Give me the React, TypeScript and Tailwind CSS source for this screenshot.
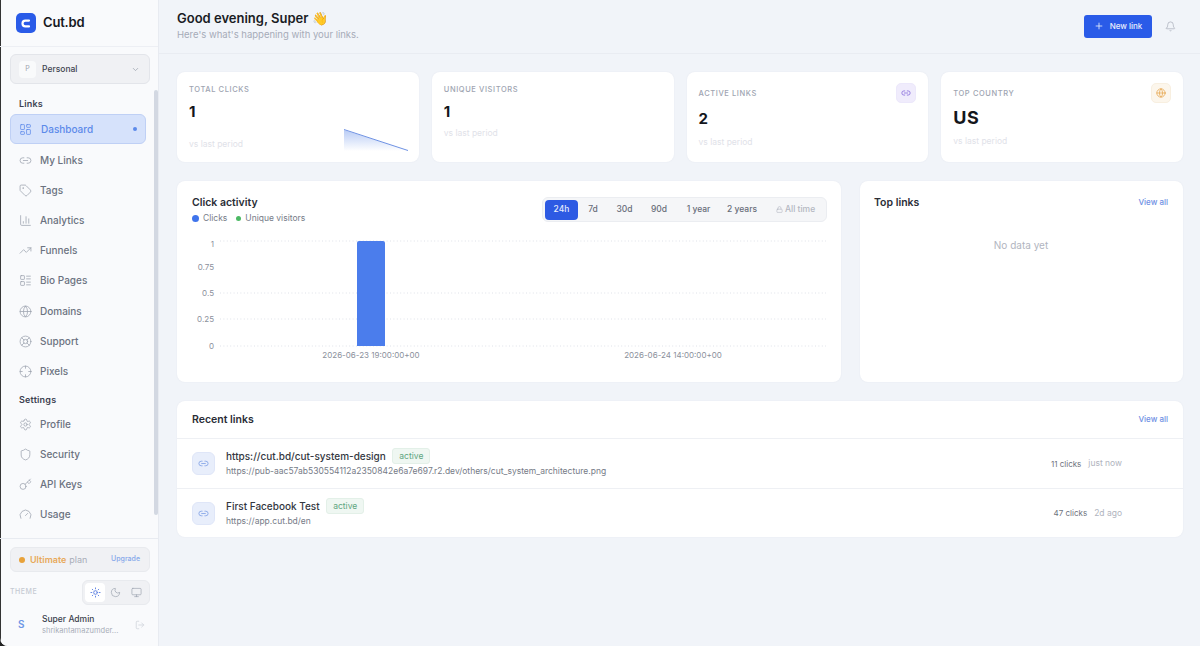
import {
  Bell,
  ChartColumn,
  ChevronDown,
  Crosshair,
  Gauge,
  Globe,
  Key,
  LayoutDashboard,
  LayoutList,
  LifeBuoy,
  Link2,
  Lock,
  LogOut,
  Monitor,
  Moon,
  Plus,
  Settings,
  Shield,
  Sun,
  Tag,
  TrendingUp,
} from "lucide-react";

const linkItems = [
  { label: "My Links", icon: Link2 },
  { label: "Tags", icon: Tag },
  { label: "Analytics", icon: ChartColumn },
  { label: "Funnels", icon: TrendingUp },
  { label: "Bio Pages", icon: LayoutList },
  { label: "Domains", icon: Globe },
  { label: "Support", icon: LifeBuoy },
  { label: "Pixels", icon: Crosshair },
];

const settingItems = [
  { label: "Profile", icon: Settings },
  { label: "Security", icon: Shield },
  { label: "API Keys", icon: Key },
  { label: "Usage", icon: Gauge },
];

function NavItem({ label, icon: Icon }: { label: string; icon: typeof Link2 }) {
  return (
    <div className="flex h-[30.2px] items-center gap-[8px] pl-[19px] text-[10px] font-medium text-[#6b7280]">
      <Icon size={13} strokeWidth={1.4} className="shrink-0 text-[#9ca3af]" />
      {label}
    </div>
  );
}

function Sidebar() {
  return (
    <aside className="flex h-[646px] w-[159px] shrink-0 flex-col border-r border-[#e8ebf1] bg-[#f9fafc] shadow-[inset_1px_0_0_#333]">
      <div className="flex h-[47px] shrink-0 items-center gap-[7px] border-b border-[#edeff4] pl-[16px]">
        <div className="flex h-[20px] w-[20px] items-center justify-center rounded-[5px] bg-[#2a5be8]">
          <svg width="10" height="9" viewBox="0 0 10 9" fill="none">
            <path d="M8 1.6H4.4a2.9 2.9 0 0 0 0 5.8H8" stroke="#fff" strokeWidth="2.2" strokeLinecap="round" />
          </svg>
        </div>
        <span className="text-[13px] font-semibold tracking-[-0.2px] text-[#17191f]">Cut.bd</span>
      </div>

      <div className="ml-[10px] mr-[8px] mt-[7px] flex h-[30px] shrink-0 items-center rounded-[6px] border border-[#e3e5ea] bg-[#f0f1f4] pl-[8px] pr-[9px]">
        <div className="flex h-[17px] w-[17px] items-center justify-center rounded-[4px] bg-[#f9fafb] text-[7px] text-[#9ca3af]">P</div>
        <span className="ml-[6px] flex-1 text-[8.5px] font-medium text-[#3f4451]">Personal</span>
        <ChevronDown size={9} className="text-[#9ca3af]" />
      </div>

      <div className="relative min-h-0 flex-1 overflow-hidden">
        <div className="absolute right-0 top-[6px] h-[425px] w-[4px] rounded-full bg-[#d3d8e2]" />
        <div className="pl-[19px] pt-[14px] text-[9px] font-semibold leading-[12px] tracking-[0.2px] text-[#3c4150]">Links</div>
        <div className="ml-[10px] mr-[12px] mt-[4px] flex h-[30px] items-center gap-[9px] rounded-[6px] border border-[#bfd0f5] bg-[#d6e2fb] pl-[8px] pr-[8px] text-[10px] font-medium text-[#5c8aea]">
          <LayoutDashboard size={13} strokeWidth={1.4} className="shrink-0" />
          <span className="flex-1">Dashboard</span>
          <span className="h-[4px] w-[4px] rounded-full bg-[#5c8aea]" />
        </div>
        <div className="mt-[1px]">
          {linkItems.map((item) => (
            <NavItem key={item.label} {...item} />
          ))}
        </div>
        <div className="pl-[19px] pt-[7px] text-[9px] font-semibold leading-[12px] tracking-[0.2px] text-[#3c4150]">Settings</div>
        <div className="mt-[3.6px]">
          {settingItems.map((item) => (
            <NavItem key={item.label} {...item} />
          ))}
        </div>
      </div>

      <div className="h-[108px] shrink-0 border-t border-[#e8ebf1] pl-[10px] pr-[8px] pt-[8px]">
        <div className="flex h-[25px] items-center rounded-[6px] border border-[#e8eaee] bg-[#f0f1f4] pl-[8px] pr-[9px] text-[9px]">
          <span className="h-[6px] w-[6px] rounded-full bg-[#e8a23a]" />
          <span className="ml-[5px] font-semibold text-[#e8a95a]">Ultimate</span>
          <span className="ml-[3px] flex-1 text-[#a8adb8]">plan</span>
          <span className="text-[7px] font-medium text-[#85a8ea]">Upgrade</span>
        </div>
        <div className="mt-[8px] flex items-center justify-between">
          <span className="text-[7px] font-medium tracking-[0.5px] text-[#c6cad3]">THEME</span>
          <div className="flex h-[25px] w-[68px] items-center rounded-[6px] border border-[#e8eaee] bg-[#f0f1f4] p-[2px]">
            <div className="flex h-[19px] w-[20px] items-center justify-center rounded-[4px] bg-white">
              <Sun size={11} className="text-[#5c7fe0]" />
            </div>
            <div className="flex flex-1 items-center justify-center">
              <Moon size={11} strokeWidth={1.5} className="text-[#9ca3af]" />
            </div>
            <div className="flex flex-1 items-center justify-center">
              <Monitor size={11} strokeWidth={1.5} className="text-[#9ca3af]" />
            </div>
          </div>
        </div>
        <div className="mt-[8px] flex items-center">
          <span className="w-[32px] pl-[8px] text-[10px] font-semibold text-[#6d96e6]">S</span>
          <div className="min-w-0 flex-1">
            <div className="text-[8.5px] font-medium leading-[12px] text-[#3a3f4c]">Super Admin</div>
            <div className="text-[7.5px] leading-[11px] text-[#a9aeb9]">shrikantamazumder...</div>
          </div>
          <LogOut size={10} className="mr-[5px] text-[#d3d6dd]" />
        </div>
      </div>
    </aside>
  );
}

function StatCard({
  label,
  value,
  icon,
  className = "",
  valueClass = "mt-[9px] text-[15px]",
  children,
}: {
  label: string;
  value: string;
  icon?: React.ReactNode;
  className?: string;
  valueClass?: string;
  children?: React.ReactNode;
}) {
  return (
    <div className={`relative h-[90px] rounded-[8px] bg-white px-[12px] shadow-[0_0_2px_rgba(30,40,80,0.06)] ${className}`}>
      <div className="flex items-center justify-between">
        <div className={`text-[7.5px] font-medium tracking-[0.6px] text-[#9ea4b1] ${icon ? "pt-[2px]" : ""}`}>{label}</div>
        {icon}
      </div>
      <div className={`font-bold leading-[16px] text-[#14161c] ${valueClass}`}>{value}</div>
      {children}
    </div>
  );
}

function Chart() {
  const grid = [
    { y: 241, label: "1", dy: 6, line: true },
    { y: 267, label: "0.75", dy: 3, line: false },
    { y: 293, label: "0.5", dy: 3, line: true },
    { y: 319, label: "0.25", dy: 3, line: true },
    { y: 346, label: "0", dy: 3, line: true },
  ];
  return (
    <svg width="664" height="140" viewBox="177 235 664 140" className="block">
      {grid.map((g) => (
        <g key={g.y}>
          {g.line && <line x1="220" x2="826" y1={g.y} y2={g.y} stroke="#dfe2e9" strokeWidth="1" strokeDasharray="1 2.4" />}
          <text x="214" y={g.y + g.dy} textAnchor="end" fontSize="8" fill="#8b909c">{g.label}</text>
        </g>
      ))}
      <path d="M357 346V243a2 2 0 0 1 2-2h24a2 2 0 0 1 2 2v103z" fill="#4b7dec" />
      <text x="371" y="358" textAnchor="middle" fontSize="8" fill="#8b909c">2026-06-23 19:00:00+00</text>
      <text x="673" y="358" textAnchor="middle" fontSize="8" fill="#8b909c">2026-06-24 14:00:00+00</text>
    </svg>
  );
}

function LinkRow({ title, url, clicks, time, border }: { title: string; url: string; clicks: string; time: string; border?: boolean }) {
  return (
    <div className={`flex h-[49px] items-center pl-[15px] pr-[61px] ${border ? "border-t border-[#eef0f4]" : ""}`}>
      <div className="flex h-[23px] w-[23px] shrink-0 items-center justify-center rounded-[6px] border border-[#dfe6f8] bg-[#e8eefb]">
        <Link2 size={11} className="text-[#8aa8e8]" />
      </div>
      <div className="ml-[11px] min-w-0 flex-1 pb-[2px]">
        <div className="flex items-center gap-[6.5px]">
          <span className="text-[10px] font-medium leading-[16px] text-[#33373f]">{title}</span>
          <span className="rounded-[3px] border border-[#e3f0e8] bg-[#eff7f2] px-[6px] text-[8.5px] leading-[14px] text-[#5ea681]">active</span>
        </div>
        <div className="mt-[1px] text-[8.5px] leading-[12px] text-[#767b87]">{url}</div>
      </div>
      <span className="text-[8px] text-[#6e727d]">{clicks}</span>
      <span className="ml-[7px] text-[8.5px] text-[#b0b4be]">{time}</span>
    </div>
  );
}

export default function App() {
  return (
    <div className="flex h-[646px] w-[1200px] overflow-hidden bg-[#222] font-['Inter',sans-serif]">
      <div className="flex w-full overflow-hidden rounded-bl-[8px] bg-[#f1f4f9]">
        <Sidebar />
        <main className="min-w-0 flex-1">
          <header className="flex h-[54px] items-center justify-between border-b border-[#e9ecf2] pl-[18px] pr-[24px]">
            <div className="-mt-[3px]">
              <div className="text-[13px] font-semibold leading-[18px] text-[#1a1c24]">Good evening, Super 👋</div>
              <div className="text-[9.5px] leading-[15px] text-[#a6abb8]">Here's what's happening with your links.</div>
            </div>
            <div className="flex items-center gap-[13px]">
              <button className="flex h-[23px] w-[68px] items-center justify-center gap-[6px] rounded-[3px] bg-[#2a5be8] pb-[1px] text-[8px] font-medium text-[#e8eefc]">
                <Plus size={10} />
                New link
              </button>
              <Bell size={11} strokeWidth={1.4} className="text-[#a0a5b1]" />
            </div>
          </header>

          <div className="flex flex-col gap-[19px] pl-[18px] pr-[17px] pt-[18px]">
            <div className="grid grid-cols-4 gap-[13px]">
              <StatCard label="TOTAL CLICKS" value="1" className="pt-[12px]">
                <div className="mt-[18px] text-[8.5px] text-[#dfe2e9]">vs last period</div>
                <svg width="64" height="24" viewBox="0 0 64 24" className="absolute bottom-[11px] right-[11px]">
                  <defs>
                    <linearGradient id="spark" x1="0" y1="0" x2="0" y2="1">
                      <stop offset="0" stopColor="#b9ccf5" />
                      <stop offset="1" stopColor="#ffffff" />
                    </linearGradient>
                  </defs>
                  <path d="M0 3L64 23.5V24H0z" fill="url(#spark)" />
                  <path d="M0 2.5L64 23.5" stroke="#5f86e0" strokeWidth="0.9" fill="none" />
                </svg>
              </StatCard>
              <StatCard label="UNIQUE VISITORS" value="1" className="pt-[12px]">
                <div className="mt-[7px] text-[8.5px] text-[#dfe2e9]">vs last period</div>
              </StatCard>
              <StatCard
                label="ACTIVE LINKS"
                value="2"
                className="pt-[11px]"
                valueClass="mt-[8px] text-[15px]"
                icon={
                  <div className="flex h-[20px] w-[20px] items-center justify-center rounded-[5px] border border-[#ece8fb] bg-[#f0ecfc]">
                    <Link2 size={10} className="text-[#8a6fdc]" />
                  </div>
                }
              >
                <div className="mt-[9px] text-[8.5px] text-[#dfe2e9]">vs last period</div>
              </StatCard>
              <StatCard
                label="TOP COUNTRY"
                value="US"
                className="pt-[11px]"
                valueClass="mt-[7px] text-[18px] tracking-[0.5px]"
                icon={
                  <div className="flex h-[20px] w-[20px] items-center justify-center rounded-[5px] border border-[#f8efe0] bg-[#fcf6ec]">
                    <Globe size={10} className="text-[#e8ac5a]" />
                  </div>
                }
              >
                <div className="mt-[9px] text-[8.5px] text-[#dfe2e9]">vs last period</div>
              </StatCard>
            </div>

            <div className="flex gap-[19px]">
              <section className="h-[201px] w-[664px] shrink-0 rounded-[8px] bg-white shadow-[0_0_2px_rgba(30,40,80,0.06)]">
                <div className="flex items-start justify-between pl-[15px] pr-[14px] pt-[15px]">
                  <div>
                    <div className="text-[10.5px] font-semibold leading-[13px] text-[#2a2d36]">Click activity</div>
                    <div className="mt-[3px] flex items-center text-[8.5px] leading-[12px] text-[#777c88]">
                      <span className="h-[7px] w-[7px] rounded-full bg-[#3f74ec]" />
                      <span className="ml-[4px]">Clicks</span>
                      <span className="ml-[9px] h-[5px] w-[5px] rounded-full bg-[#4cb964]" />
                      <span className="ml-[4px]">Unique visitors</span>
                    </div>
                  </div>
                  <div className="mt-[1px] flex h-[25px] items-center rounded-[6px] border border-[#ebedf1] bg-[#f5f6f8] pl-[2px] text-[8.5px] font-medium text-[#686d78]">
                    <span className="flex h-[20px] w-[33px] items-center justify-center rounded-[4px] bg-[#2d5ae3] text-[#e5ecfc]">24h</span>
                    <span className="w-[30px] text-center">7d</span>
                    <span className="w-[33px] text-center">30d</span>
                    <span className="w-[36px] text-center">90d</span>
                    <span className="w-[43px] text-center">1 year</span>
                    <span className="w-[44px] text-center">2 years</span>
                    <span className="flex w-[62px] items-center gap-[2px] pl-[12px] text-[#b3b7c1]">
                      <Lock size={7} />
                      All time
                    </span>
                  </div>
                </div>
                <div className="mt-[11px]">
                  <Chart />
                </div>
              </section>
              <section className="flex h-[201px] flex-1 flex-col rounded-[8px] bg-white pl-[14px] pr-[15px] pt-[15px] shadow-[0_0_2px_rgba(30,40,80,0.06)]">
                <div className="flex h-[13px] items-center justify-between">
                  <span className="text-[10.5px] font-semibold leading-[13px] text-[#2a2d36]">Top links</span>
                  <span className="text-[8px] font-medium leading-[13px] text-[#6f90e4]">View all</span>
                </div>
                <div className="mt-[29px] text-center text-[10px] text-[#b1b5c0]">No data yet</div>
              </section>
            </div>

            <section className="rounded-[8px] bg-white shadow-[0_0_2px_rgba(30,40,80,0.06)]">
              <div className="flex h-[38px] items-center justify-between border-b border-[#eef0f4] pl-[15px] pr-[15px]">
                <span className="text-[10.5px] font-semibold text-[#2a2d36]">Recent links</span>
                <span className="pb-[2px] text-[8px] font-medium text-[#6f90e4]">View all</span>
              </div>
              <LinkRow
                title="https://cut.bd/cut-system-design"
                url="https://pub-aac57ab530554112a2350842e6a7e697.r2.dev/others/cut_system_architecture.png"
                clicks="11 clicks"
                time="just now"
              />
              <LinkRow title="First Facebook Test" url="https://app.cut.bd/en" clicks="47 clicks" time="2d ago" border />
            </section>
          </div>
        </main>
      </div>
    </div>
  );
}
